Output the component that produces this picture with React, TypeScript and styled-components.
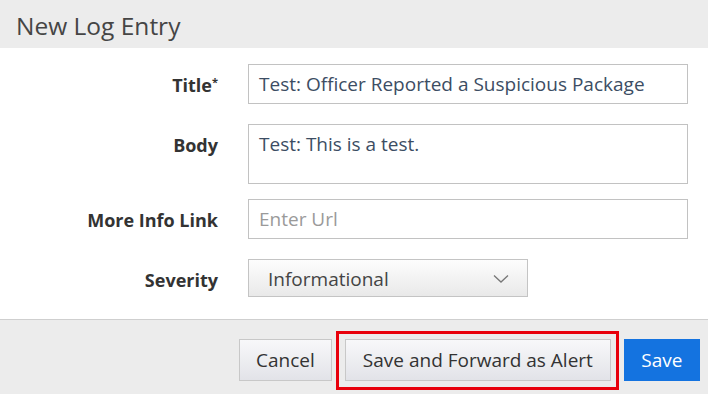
import React from 'react';
import styled, { createGlobalStyle } from 'styled-components';

const GlobalStyle = createGlobalStyle`
  html, body {
    margin: 0;
    padding: 0;
    background: #ffffff;
  }
  body {
    font-family: "Open Sans", "Noto Sans", sans-serif;
  }
`;

const Dialog = styled.div`
  width: 708px;
  height: 394px;
  display: flex;
  flex-direction: column;
  background: #ffffff;
  overflow: hidden;
`;

const Header = styled.div`
  height: 48px;
  flex: none;
  display: flex;
  align-items: center;
  padding: 2px 0 0 16px;
  box-sizing: border-box;
  background: #ececec;
  color: #454545;
  font-size: 24.5px;
  font-weight: 400;
`;

const Body = styled.div`
  display: grid;
  grid-template-columns: 218px 1fr;
  column-gap: 30px;
  padding: 16px 20px 22px 0;
  border-bottom: 1px solid #cfcfcf;
`;

const Label = styled.label<{ $gap: number }>`
  justify-self: end;
  padding-top: 9px;
  margin-bottom: ${({ $gap }) => $gap}px;
  color: #333333;
  font-size: 18px;
  font-weight: 700;
  line-height: 24px;

  sup {
    font-size: 11px;
    vertical-align: 6px;
    line-height: 0;
  }
`;

const Field = styled.div<{ $height: number; $gap: number; $placeholder?: boolean }>`
  box-sizing: border-box;
  height: ${({ $height }) => $height}px;
  margin-bottom: ${({ $gap }) => $gap}px;
  padding: 7px 10px;
  border: 1px solid #c2c2c2;
  background: #ffffff;
  color: ${({ $placeholder }) => ($placeholder ? '#9a9a9a' : '#3c4d63')};
  font-size: 19px;
  line-height: 24px;
  white-space: nowrap;
`;

const Select = styled.div`
  box-sizing: border-box;
  width: 280px;
  height: 38px;
  display: flex;
  align-items: center;
  justify-content: space-between;
  padding: 2px 18px 0 19px;
  border: 1px solid #c4c4c4;
  background: linear-gradient(#fdfdfd, #e9e9e9);
  color: #444444;
  font-size: 19px;
`;

const Footer = styled.div`
  flex: 1;
  display: flex;
  justify-content: flex-end;
  align-items: flex-start;
  gap: 4px;
  padding: 11px 8px 0 0;
  background: #ececec;
`;

const Button = styled.button<{ $primary?: boolean; $wide?: boolean }>`
  box-sizing: border-box;
  height: 42px;
  margin-top: 8px;
  padding: 0 ${({ $primary, $wide }) => ($primary ? 17.5 : $wide ? 17 : 16)}px;
  border: ${({ $primary }) => ($primary ? 'none' : '1px solid #c8c8c8')};
  background: ${({ $primary }) =>
    $primary ? '#1473e0' : 'linear-gradient(#f8f8fa, #e2e3e8)'};
  color: ${({ $primary }) => ($primary ? '#ffffff' : '#333333')};
  font-family: inherit;
  font-size: 19px;
`;

const Highlight = styled.div`
  display: flex;
  padding: 5px 5px 6px 6px;
  border: 3px solid #e8000b;
  margin-right: 1px;

  ${Button} {
    margin-top: 0;
  }
`;

const Chevron = () => (
  <svg width="16" height="10" viewBox="0 0 16 10" fill="none">
    <path d="M1 1.5 L8 8 L15 1.5" stroke="#777" strokeWidth="1.3" />
  </svg>
);

export default function App() {
  return (
    <Dialog>
      <GlobalStyle />
      <Header>New Log Entry</Header>
      <Body>
        <Label $gap={20}>
          Title<sup>*</sup>
        </Label>
        <Field $height={40} $gap={20}>
          Test: Officer Reported a Suspicious Package
        </Field>
        <Label $gap={16}>Body</Label>
        <Field $height={60} $gap={15}>
          Test: This is a test.
        </Field>
        <Label $gap={21}>More Info Link</Label>
        <Field $height={40} $gap={20} $placeholder>
          Enter Url
        </Field>
        <Label $gap={0}>Severity</Label>
        <Select>
          <span>Informational</span>
          <Chevron />
        </Select>
      </Body>
      <Footer>
        <Button>Cancel</Button>
        <Highlight>
          <Button $wide>Save and Forward as Alert</Button>
        </Highlight>
        <Button $primary>Save</Button>
      </Footer>
    </Dialog>
  );
}
